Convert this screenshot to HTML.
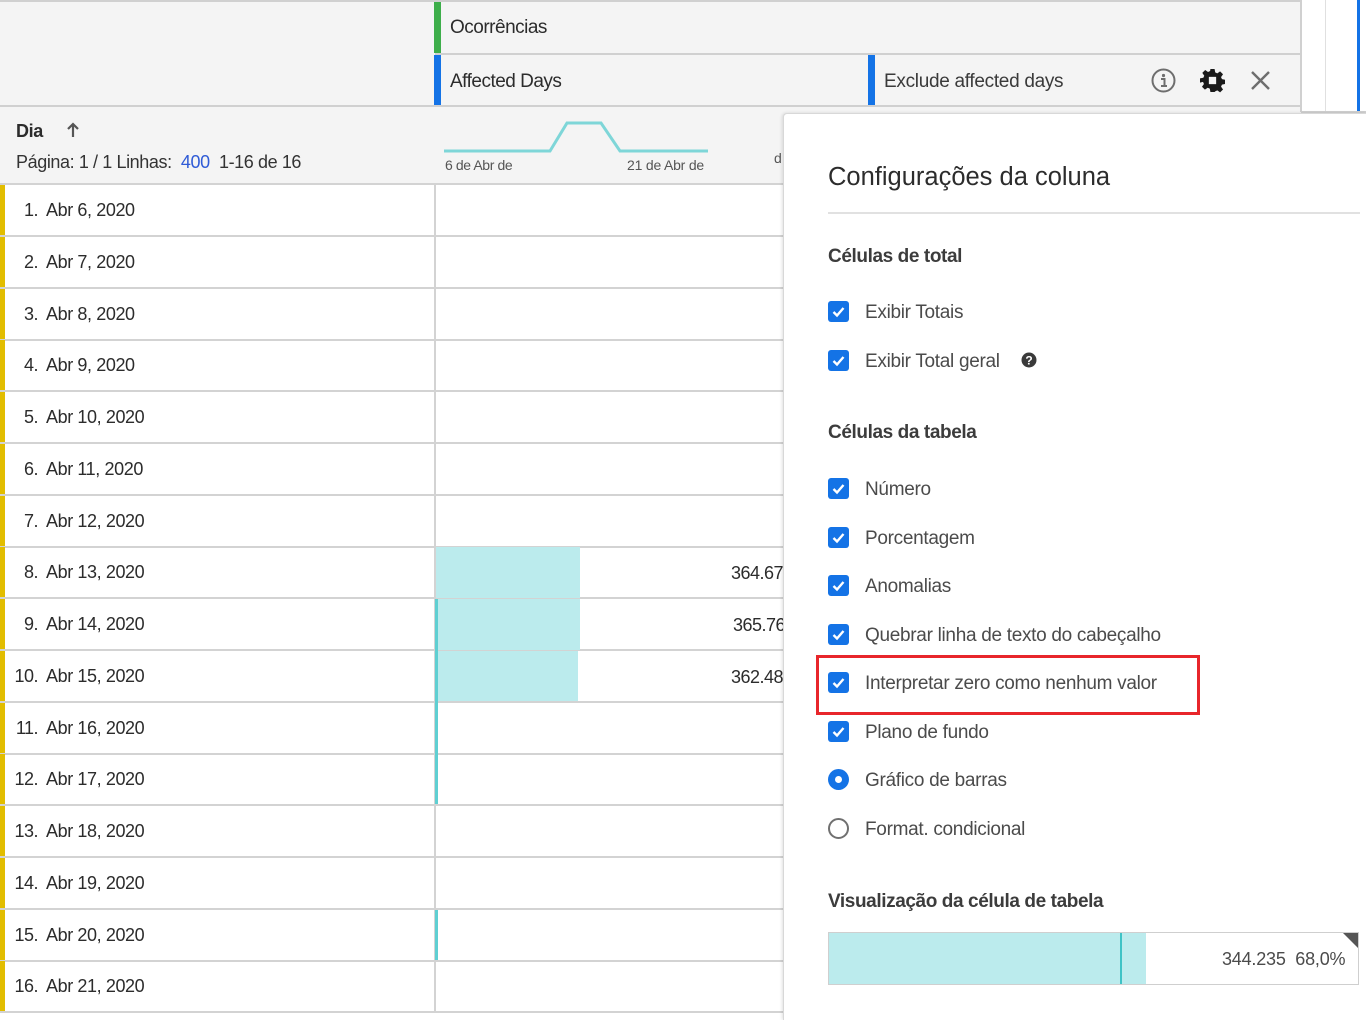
<!DOCTYPE html>
<html><head><meta charset="utf-8">
<style>
*{margin:0;padding:0;box-sizing:border-box}
body{width:1366px;height:1020px;position:relative;overflow:hidden;background:#fff;font-family:"Liberation Sans",sans-serif;color:#2c2c2c}
.a{position:absolute}
.t{position:absolute;white-space:nowrap}
.row{position:absolute;left:0;width:783px;height:52px;border-bottom:2px solid #d3d3d3}
.row .yb{position:absolute;left:0;top:0;width:5px;height:100%;background:#e2bd00}
.row .n{position:absolute;right:745px;top:15px;font-size:18px;letter-spacing:-0.5px}
.row .d{position:absolute;left:46px;top:15px;font-size:18px;letter-spacing:-0.4px}
.cb{position:absolute;left:828px;width:21px;height:21px;background:#1473e6;border-radius:3px}
.cb svg{position:absolute;left:3px;top:3px}
.lbl{position:absolute;left:865px;font-size:19px;color:#4b4b4b;letter-spacing:-0.3px;white-space:nowrap}
.h{position:absolute;left:828px;font-size:19px;font-weight:bold;color:#3c3c3c;letter-spacing:-0.4px;white-space:nowrap}
</style></head><body>
<div class="a" style="left:0;top:0;width:1301px;height:184px;background:#f4f4f4"></div>
<div class="a" style="left:0;top:0;width:1301px;height:2px;background:#d0d0d0"></div>
<div class="a" style="left:435px;top:53px;width:866px;height:2px;background:#d0d0d0"></div>
<div class="a" style="left:0;top:105px;width:1301px;height:2px;background:#d0d0d0"></div>
<div class="a" style="left:1300px;top:0;width:2px;height:112px;background:#d0d0d0"></div>
<div class="a" style="left:0;top:183px;width:783px;height:2px;background:#d3d3d3"></div>
<div class="a" style="left:434px;top:2px;width:7px;height:51px;background:#3dae4a"></div>
<div class="a" style="left:434px;top:55px;width:7px;height:50px;background:#1473e6"></div>
<div class="a" style="left:868px;top:55px;width:7px;height:50px;background:#1473e6"></div>
<div class="t" style="left:450px;top:17px;font-size:19px;letter-spacing:-0.5px">Ocorrências</div>
<div class="t" style="left:450px;top:71px;font-size:19px;letter-spacing:-0.5px">Affected Days</div>
<div class="t" style="left:884px;top:71px;font-size:19px;letter-spacing:-0.3px;color:#3a3a3a">Exclude affected days</div>
<svg class="a" style="left:1151px;top:68px" width="25" height="25" viewBox="0 0 25 25"><circle cx="12.5" cy="12.5" r="11" fill="none" stroke="#6e6e6e" stroke-width="2"/><circle cx="12.5" cy="7.5" r="1.6" fill="#6e6e6e"/><path d="M10 11h3.5v7M10 18h6" stroke="#6e6e6e" stroke-width="2" fill="none"/></svg>
<svg class="a" style="left:1200px;top:68px" width="25" height="25" viewBox="0 0 24 24"><path fill="#1a1a1a" d="M10 1h4l.6 3.2 2 .9 2.7-1.9 2.8 2.8-1.9 2.7.9 2 3.2.6v4l-3.2.6-.9 2 1.9 2.7-2.8 2.8-2.7-1.9-2 .9L14 23h-4l-.6-3.2-2-.9-2.7 1.9-2.8-2.8 1.9-2.7-.9-2L0 14v-4l3.2-.6.9-2L2.2 4.7 5 1.9l2.7 1.9 2-.9z"/><rect x="8.5" y="8.5" width="7" height="7" fill="#f4f4f4"/></svg>
<svg class="a" style="left:1250px;top:70px" width="21" height="21" viewBox="0 0 21 21"><path d="M2 2L19 19M19 2L2 19" stroke="#6e6e6e" stroke-width="2.4"/></svg>
<div class="a" style="left:1325px;top:0;width:1px;height:112px;background:#e0e0e0"></div>
<div class="a" style="left:1357px;top:0;width:3px;height:112px;background:#1473e6"></div>
<div class="a" style="left:1301px;top:111px;width:65px;height:2px;background:#d0d0d0"></div>
<div class="t" style="left:16px;top:121px;font-size:18px;font-weight:bold;letter-spacing:-0.4px">Dia</div>
<svg class="a" style="left:66px;top:122px" width="14" height="16"><path d="M7 15V3M2 7l5-5 5 5" stroke="#555" stroke-width="2.2" fill="none"/></svg>
<div class="t" style="left:16px;top:152px;font-size:18px;letter-spacing:-0.4px;color:#333">Página: 1 / 1 Linhas: <span style="color:#2f5bd6">&nbsp;400&nbsp;</span>&nbsp;1-16 de 16</div>
<svg class="a" style="left:440px;top:118px" width="275" height="40"><path d="M4 33H110L127 5H161L180 33H268" stroke="#7ed6d8" stroke-width="3" fill="none"/></svg>
<div class="t" style="left:445px;top:157px;font-size:14px;color:#555;letter-spacing:-0.4px">6 de Abr de</div>
<div class="t" style="left:627px;top:157px;font-size:14px;color:#555;letter-spacing:-0.2px">21 de Abr de</div>
<div class="t" style="left:774px;top:150px;font-size:14px;color:#555">d</div>
<div class="row" style="top:185px"><div class="yb"></div><div class="n">1.</div><div class="d">Abr 6, 2020</div></div>
<div class="row" style="top:237px"><div class="yb"></div><div class="n">2.</div><div class="d">Abr 7, 2020</div></div>
<div class="row" style="top:289px"><div class="yb"></div><div class="n">3.</div><div class="d">Abr 8, 2020</div></div>
<div class="row" style="top:340px"><div class="yb"></div><div class="n">4.</div><div class="d">Abr 9, 2020</div></div>
<div class="row" style="top:392px"><div class="yb"></div><div class="n">5.</div><div class="d">Abr 10, 2020</div></div>
<div class="row" style="top:444px"><div class="yb"></div><div class="n">6.</div><div class="d">Abr 11, 2020</div></div>
<div class="row" style="top:496px"><div class="yb"></div><div class="n">7.</div><div class="d">Abr 12, 2020</div></div>
<div class="row" style="top:547px"><div class="yb"></div><div class="n">8.</div><div class="d">Abr 13, 2020</div></div>
<div class="row" style="top:599px"><div class="yb"></div><div class="n">9.</div><div class="d">Abr 14, 2020</div></div>
<div class="row" style="top:651px"><div class="yb"></div><div class="n">10.</div><div class="d">Abr 15, 2020</div></div>
<div class="row" style="top:703px"><div class="yb"></div><div class="n">11.</div><div class="d">Abr 16, 2020</div></div>
<div class="row" style="top:754px"><div class="yb"></div><div class="n">12.</div><div class="d">Abr 17, 2020</div></div>
<div class="row" style="top:806px"><div class="yb"></div><div class="n">13.</div><div class="d">Abr 18, 2020</div></div>
<div class="row" style="top:858px"><div class="yb"></div><div class="n">14.</div><div class="d">Abr 19, 2020</div></div>
<div class="row" style="top:910px"><div class="yb"></div><div class="n">15.</div><div class="d">Abr 20, 2020</div></div>
<div class="row" style="top:961px"><div class="yb"></div><div class="n">16.</div><div class="d">Abr 21, 2020</div></div>
<div class="a" style="left:434px;top:185px;width:2px;height:828px;background:#d3d3d3"></div>
<div class="a" style="left:436px;top:547px;width:144px;height:51px;background:#bbebed"></div>
<div class="a" style="left:436px;top:599px;width:144px;height:51px;background:#bbebed"></div>
<div class="a" style="left:436px;top:651px;width:142px;height:50px;background:#bbebed"></div>
<div class="a" style="left:435px;top:599px;width:3px;height:205px;background:#5fcfd2"></div>
<div class="a" style="left:435px;top:910px;width:3px;height:50px;background:#5fcfd2"></div>
<div class="t" style="left:731px;top:563px;font-size:18px;letter-spacing:-0.5px">364.67</div>
<div class="t" style="left:733px;top:615px;font-size:18px;letter-spacing:-0.5px">365.76</div>
<div class="t" style="left:731px;top:667px;font-size:18px;letter-spacing:-0.5px">362.48</div>
<div class="a" style="left:783px;top:113px;width:583px;height:907px;background:#fff;border-left:1px solid #d8d8d8;border-top:1px solid #d8d8d8;border-radius:4px 0 0 0;box-shadow:-1px 0 3px rgba(0,0,0,.12)"></div>
<div class="t" style="left:828px;top:163px;font-size:25.5px;color:#2c2c2c;letter-spacing:0px">Configurações da coluna</div>
<div class="a" style="left:828px;top:212px;width:532px;height:2px;background:#e1e1e1"></div>
<div class="h" style="top:246px">Células de total</div>
<div class="cb" style="top:301px"><svg width="15" height="15"><path d="M2.5 8l3.5 3.5 6.5-7.5" stroke="#fff" stroke-width="2.4" fill="none"/></svg></div>
<div class="lbl" style="top:302px">Exibir Totais</div>
<div class="cb" style="top:350px"><svg width="15" height="15"><path d="M2.5 8l3.5 3.5 6.5-7.5" stroke="#fff" stroke-width="2.4" fill="none"/></svg></div>
<div class="lbl" style="top:351px">Exibir Total geral</div>
<svg class="a" style="left:1021px;top:352px" width="16" height="16"><circle cx="8" cy="8" r="7.5" fill="#3a3a3a"/><text x="8" y="12.5" font-size="12" font-weight="bold" fill="#fff" text-anchor="middle" font-family="Liberation Sans">?</text></svg>
<div class="h" style="top:422px">Células da tabela</div>
<div class="cb" style="top:478px"><svg width="15" height="15"><path d="M2.5 8l3.5 3.5 6.5-7.5" stroke="#fff" stroke-width="2.4" fill="none"/></svg></div>
<div class="lbl" style="top:479px">Número</div>
<div class="cb" style="top:527px"><svg width="15" height="15"><path d="M2.5 8l3.5 3.5 6.5-7.5" stroke="#fff" stroke-width="2.4" fill="none"/></svg></div>
<div class="lbl" style="top:528px">Porcentagem</div>
<div class="cb" style="top:575px"><svg width="15" height="15"><path d="M2.5 8l3.5 3.5 6.5-7.5" stroke="#fff" stroke-width="2.4" fill="none"/></svg></div>
<div class="lbl" style="top:576px">Anomalias</div>
<div class="cb" style="top:624px"><svg width="15" height="15"><path d="M2.5 8l3.5 3.5 6.5-7.5" stroke="#fff" stroke-width="2.4" fill="none"/></svg></div>
<div class="lbl" style="top:625px">Quebrar linha de texto do cabeçalho</div>
<div class="cb" style="top:672px"><svg width="15" height="15"><path d="M2.5 8l3.5 3.5 6.5-7.5" stroke="#fff" stroke-width="2.4" fill="none"/></svg></div>
<div class="lbl" style="top:673px">Interpretar zero como nenhum valor</div>
<div class="a" style="left:816px;top:655px;width:384px;height:60px;border:3px solid #e8262b"></div>
<div class="cb" style="top:721px"><svg width="15" height="15"><path d="M2.5 8l3.5 3.5 6.5-7.5" stroke="#fff" stroke-width="2.4" fill="none"/></svg></div>
<div class="lbl" style="top:722px">Plano de fundo</div>
<div class="a" style="left:828px;top:769px;width:21px;height:21px;border-radius:50%;background:#1473e6"></div>
<div class="a" style="left:835px;top:776px;width:7px;height:7px;border-radius:50%;background:#fff"></div>
<div class="lbl" style="top:770px">Gráfico de barras</div>
<div class="a" style="left:828px;top:818px;width:21px;height:21px;border-radius:50%;border:2px solid #707070"></div>
<div class="lbl" style="top:819px">Format. condicional</div>
<div class="h" style="top:891px">Visualização da célula de tabela</div>
<div class="a" style="left:828px;top:932px;width:531px;height:53px;border:1px solid #cfcfcf;background:#fff"></div>
<div class="a" style="left:829px;top:933px;width:317px;height:51px;background:#bbebed"></div>
<div class="a" style="left:1120px;top:933px;width:2px;height:51px;background:#3fc3c6"></div>
<svg class="a" style="left:1343px;top:933px" width="15" height="15"><path d="M0 0H15V15Z" fill="#555"/></svg>
<div class="t" style="left:1222px;top:949px;font-size:18px;color:#4b4b4b;letter-spacing:-0.2px">344.235&nbsp; 68,0%</div>
</body></html>
